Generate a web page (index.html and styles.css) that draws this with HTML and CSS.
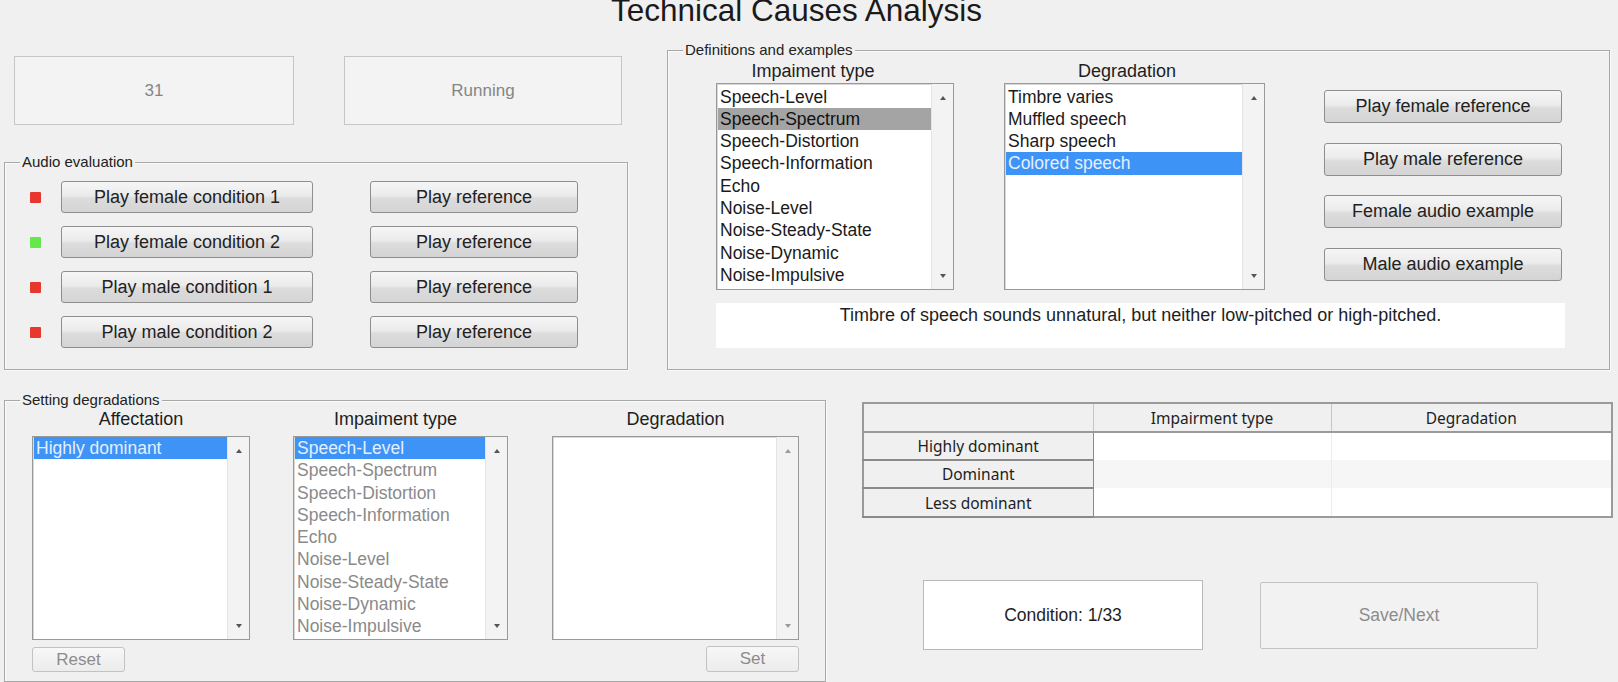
FILE: index.html
```html
<!DOCTYPE html>
<html>
<head>
<meta charset="utf-8">
<title>Technical Causes Analysis</title>
<link rel="stylesheet" href="styles.css">
</head>
<body>
<div class="app">
  <h1 class="title">Technical Causes Analysis</h1>

  <div class="row row-a">
    <div class="col-left">
      <div class="status-row">
        <div class="status status-num">31</div>
        <div class="status status-run">Running</div>
      </div>

      <div class="group audio">
        <span class="legend">Audio evaluation</span>
        <div class="audio-row">
          <span class="led red"></span>
          <button class="btn btn-cond">Play female condition 1</button>
          <button class="btn btn-ref">Play reference</button>
        </div>
        <div class="audio-row">
          <span class="led green"></span>
          <button class="btn btn-cond">Play female condition 2</button>
          <button class="btn btn-ref">Play reference</button>
        </div>
        <div class="audio-row">
          <span class="led red"></span>
          <button class="btn btn-cond">Play male condition 1</button>
          <button class="btn btn-ref">Play reference</button>
        </div>
        <div class="audio-row">
          <span class="led red"></span>
          <button class="btn btn-cond">Play male condition 2</button>
          <button class="btn btn-ref">Play reference</button>
        </div>
      </div>
    </div>

    <div class="group defs">
      <span class="legend">Definitions and examples</span>
      <div class="defs-top">
        <div class="list-col lc-imp">
          <div class="col-label">Impaiment type</div>
          <div class="listbox lb-def">
            <ul class="items">
              <li>Speech-Level</li>
              <li class="sel-gray">Speech-Spectrum</li>
              <li>Speech-Distortion</li>
              <li>Speech-Information</li>
              <li>Echo</li>
              <li>Noise-Level</li>
              <li>Noise-Steady-State</li>
              <li>Noise-Dynamic</li>
              <li>Noise-Impulsive</li>
            </ul>
            <div class="scroll"><span class="arr up"></span><span class="arr down"></span></div>
          </div>
        </div>
        <div class="list-col lc-deg">
          <div class="col-label">Degradation</div>
          <div class="listbox lb-def">
            <ul class="items">
              <li>Timbre varies</li>
              <li>Muffled speech</li>
              <li>Sharp speech</li>
              <li class="sel-blue">Colored speech</li>
            </ul>
            <div class="scroll"><span class="arr up"></span><span class="arr down"></span></div>
          </div>
        </div>
        <div class="defs-buttons">
          <button class="btn btn-side">Play female reference</button>
          <button class="btn btn-side">Play male reference</button>
          <button class="btn btn-side">Female audio example</button>
          <button class="btn btn-side">Male audio example</button>
        </div>
      </div>
      <div class="desc">Timbre of speech sounds unnatural, but neither low-pitched or high-pitched.</div>
    </div>
  </div>

  <div class="row row-b">
    <div class="group setting">
      <span class="legend">Setting degradations</span>
      <div class="set-lists">
        <div class="list-col sc-aff">
          <div class="col-label">Affectation</div>
          <div class="listbox lb-set">
            <ul class="items">
              <li class="sel-blue">Highly dominant</li>
            </ul>
            <div class="scroll"><span class="arr up"></span><span class="arr down"></span></div>
          </div>
        </div>
        <div class="list-col sc-imp">
          <div class="col-label">Impaiment type</div>
          <div class="listbox lb-set dim">
            <ul class="items">
              <li class="sel-blue">Speech-Level</li>
              <li>Speech-Spectrum</li>
              <li>Speech-Distortion</li>
              <li>Speech-Information</li>
              <li>Echo</li>
              <li>Noise-Level</li>
              <li>Noise-Steady-State</li>
              <li>Noise-Dynamic</li>
              <li>Noise-Impulsive</li>
            </ul>
            <div class="scroll"><span class="arr up"></span><span class="arr down"></span></div>
          </div>
        </div>
        <div class="list-col sc-deg">
          <div class="col-label">Degradation</div>
          <div class="listbox lb-set">
            <ul class="items"></ul>
            <div class="scroll light"><span class="arr up"></span><span class="arr down"></span></div>
          </div>
        </div>
      </div>
      <div class="set-buttons">
        <button class="btn btn-off btn-reset">Reset</button>
        <button class="btn btn-off btn-set">Set</button>
      </div>
    </div>

    <div class="results">
      <table class="grid">
        <colgroup>
          <col class="c1"><col class="c2"><col class="c3">
        </colgroup>
        <tr class="hdr"><th class="corner"></th><th>Impairment type</th><th>Degradation</th></tr>
        <tr><th class="rh">Highly dominant</th><td></td><td></td></tr>
        <tr class="alt"><th class="rh">Dominant</th><td></td><td></td></tr>
        <tr class="last"><th class="rh">Less dominant</th><td></td><td></td></tr>
      </table>
      <div class="cond-row">
        <div class="cond">Condition: 1/33</div>
        <div class="savenext">Save/Next</div>
      </div>
    </div>
  </div>
</div>
</body>
</html>
```
FILE: styles.css
```css
* { box-sizing: border-box; }
html, body { margin: 0; padding: 0; }
body {
  background: #f0f0f0;
  font-family: "Liberation Sans", Arial, sans-serif;
  color: #1e1e1e;
  width: 1618px;
  height: 682px;
  overflow: hidden;
}
.app { width: 1618px; }

.title {
  margin: -5px 0 0;
  padding-right: 25px;
  height: 28px;
  font-size: 31.5px;
  line-height: 31.5px;
  font-weight: normal;
  text-align: center;
  color: #1a1a1a;
  white-space: nowrap;
}

.row { display: flex; align-items: flex-start; padding-left: 4px; }

/* ---------- left top ---------- */
.col-left { width: 624px; }
.status-row { display: flex; margin-top: 33px; padding-left: 10px; gap: 50px; }
.status {
  width: 280px; height: 69px;
  border: 1px solid #c6c6c6;
  background: #f3f3f3;
  display: flex; align-items: center; justify-content: center;
  color: #858585; font-size: 17px;
}
.status-run { width: 278px; }

.group {
  position: relative;
  border: 1px solid #a8a8a8;
  box-shadow: inset 1px 1px 0 #fbfbfb, 1px 1px 0 #fbfbfb;
}
.legend {
  position: absolute;
  top: -10px; left: 15px;
  padding: 0 2px;
  background: #f0f0f0;
  font-size: 15px; line-height: 18px;
  color: #222;
  white-space: nowrap;
}

.audio { margin-top: 37px; height: 208px; padding: 18px 0 0 25px; }
.audio-row { display: flex; align-items: center; height: 32px; margin-bottom: 13px; }
.led { width: 11px; height: 11px; margin-right: 20px; border-radius: 1px; }
.led.red { background: #e8372c; }
.led.green { background: #66e84a; }

.btn {
  font-family: "Liberation Sans", Arial, sans-serif;
  font-size: 18px;
  color: #222;
  border: 1px solid #8e8e8e;
  border-radius: 3px;
  background: linear-gradient(#f6f6f6 0%, #ebebeb 45%, #dcdcdc 55%, #d4d4d4 100%);
  padding: 0;
  margin: 0;
  white-space: nowrap;
}
.btn-cond { width: 252px; height: 32px; margin-right: 57px; }
.btn-ref { width: 208px; height: 32px; }

/* ---------- definitions ---------- */
.defs {
  margin-left: 39px; margin-top: 27px;
  width: 943px; height: 320px;
  padding: 10px 0 0 48px;
}
.defs-top { display: flex; align-items: flex-start; }
.list-col { display: flex; flex-direction: column; }
.col-label {
  font-size: 18px; line-height: 20px; height: 20px;
  text-align: center; white-space: nowrap; color: #1e1e1e;
}
.lc-imp { width: 238px; }
.lc-imp .col-label { padding-right: 44px; }
.lc-deg { width: 261px; margin-left: 50px; }
.lc-deg .col-label { padding-right: 15px; }

.listbox {
  display: flex;
  background: #fff;
  border: 1px solid #999;
  box-shadow: inset 1px 1px 0 #d8d8d8;
}
.lb-def { height: 207px; margin-top: 2px; }
.items { flex: 1; list-style: none; margin: 0; padding: 1.5px 0 0 1px; overflow: hidden; }
.items li {
  height: 22.3px; line-height: 22.3px;
  font-size: 17.5px; padding-left: 2px;
  white-space: nowrap; color: #1a1a1a;
}
.items li.sel-gray { background: #a4a4a4; color: #111; }
.items li.sel-blue { background: #3d94f6; color: #e4efff; }

.scroll {
  width: 22px;
  background: #f3f3f3;
  border-left: 1px solid #e4e4e4;
  display: flex; flex-direction: column; justify-content: space-between; align-items: center;
  padding: 12px 0 11px;
}
.arr { width: 0; height: 0; border-left: 3.5px solid transparent; border-right: 3.5px solid transparent; }
.arr.up { border-bottom: 4px solid #555; }
.arr.down { border-top: 4px solid #555; }
.scroll.light .arr.up { border-bottom-color: #9a9a9a; }
.scroll.light .arr.down { border-top-color: #9a9a9a; }

.defs-buttons { display: flex; flex-direction: column; margin-left: 59px; margin-top: 29px; gap: 19.5px; }
.btn-side { width: 238px; height: 33px; }

.desc {
  margin-top: 13px;
  width: 849px; height: 45px;
  background: #fff;
  text-align: center;
  font-size: 18px; line-height: 20px;
  padding-top: 2px;
  color: #1e1e1e;
  white-space: nowrap;
}

/* ---------- setting degradations ---------- */
.row-b { margin-top: 30px; }
.setting { width: 822px; height: 282px; padding: 8px 0 0 27px; }
.set-lists { display: flex; align-items: flex-start; }
.lb-set { height: 204px; margin-top: 7px; }
.lb-set .items { padding-top: 0; }
.sc-aff { width: 218px; }
.sc-imp { width: 215px; margin-left: 43px; }
.sc-imp .col-label { padding-right: 10px; }
.sc-deg { width: 247px; margin-left: 44px; }
.dim .items li { color: #8a8a8a; }
.dim .items li.sel-blue { color: #e4efff; }

.set-buttons { display: flex; justify-content: space-between; width: 767px; margin-top: 7px; }
.btn-off {
  color: #8c8c8c; font-size: 17px;
  border-color: #c2c2c2;
  background: linear-gradient(#f7f7f7, #ececec);
}
.btn-reset { width: 93px; height: 25px; }
.btn-set { width: 93px; height: 26px; margin-top: -1px; }

/* ---------- results ---------- */
.results { margin-left: 36px; }
.grid {
  margin-top: 2px;
  width: 749px;
  table-layout: fixed;
  border-collapse: collapse;
  border: 2px solid #9a9a9a;
  font-family: "Noto Sans", "Liberation Sans", sans-serif;
  font-size: 15.5px;
}
.grid col.c1 { width: 230px; }
.grid col.c2 { width: 238px; }
.grid col.c3 { width: 281px; }
.grid th { font-weight: normal; color: #1e1e1e; padding: 0; text-align: center; }
.grid tr { height: 28px; }
.grid tr.hdr { height: 29px; }
.grid tr.last { height: 29px; }
.grid .hdr th { background: #f0f0f0; border-right: 1px solid #c6c6c6; border-bottom: 2px solid #9a9a9a; }
.grid th.rh { background: #f0f0f0; border-right: 1px solid #8a8a8a; border-bottom: 2px solid #8a8a8a; }
.grid td { background: #fff; border-right: 1px solid #ececec; padding: 0; }
.grid tr.alt td { background: #f6f6f6; }

.cond-row { display: flex; align-items: flex-start; margin-top: 62px; padding-left: 61px; }
.cond {
  width: 280px; height: 70px;
  background: #fff; border: 1px solid #b8b8b8;
  display: flex; align-items: center; justify-content: center;
  font-size: 17.5px; color: #1e1e1e;
}
.savenext {
  width: 278px; height: 67px;
  margin-left: 57px; margin-top: 2px;
  border: 1px solid #c4c4c4; border-radius: 2px;
  background: #f2f2f2;
  display: flex; align-items: center; justify-content: center;
  font-size: 17.5px; color: #8c8c8c;
}
```
